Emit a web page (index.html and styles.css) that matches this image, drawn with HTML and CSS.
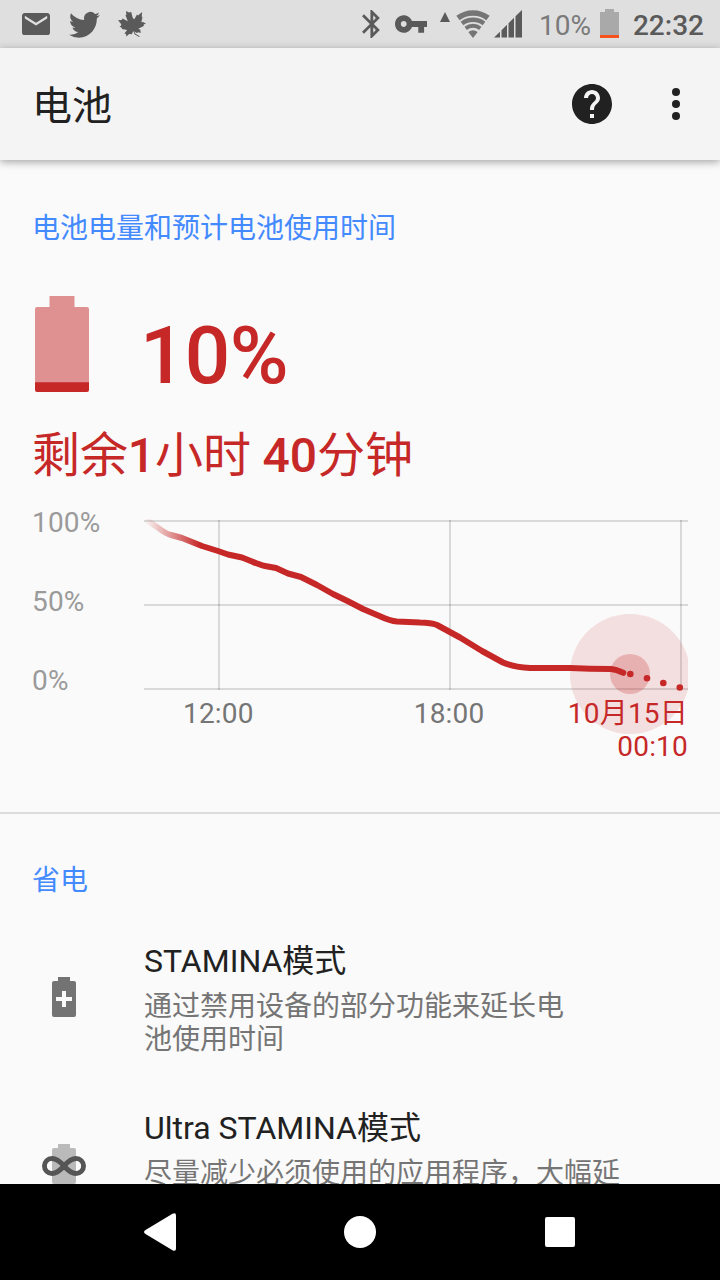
FILE: index.html
```html
<!DOCTYPE html>
<html lang="zh-CN">
<head>
<meta charset="utf-8">
<title>电池</title>
<link rel="stylesheet" href="styles.css">
</head>
<body>
<div class="screen">
  <div class="status-bar">
    <div class="notifications">
      <svg class="mail" width="28" height="22.4" viewBox="2 4 20 16"><path d="M20 4H4c-1.1 0-1.99.9-1.99 2L2 18c0 1.1.9 2 2 2h16c1.1 0 2-.9 2-2V6c0-1.1-.9-2-2-2zm0 4l-8 5-8-5V6l8 5 8-5v2z"/></svg>
      <svg width="31" height="27" viewBox="0 1.5 24 20.5" preserveAspectRatio="none"><path d="M23.95 4.57a10 10 0 0 1-2.82.77 4.96 4.96 0 0 0 2.16-2.72c-.95.55-2 .95-3.13 1.18a4.92 4.92 0 0 0-8.38 4.48C7.69 8.1 4.07 6.13 1.64 3.16a4.92 4.92 0 0 0 1.52 6.57 4.9 4.9 0 0 1-2.23-.61v.06c0 2.39 1.7 4.38 3.95 4.83a5 5 0 0 1-2.21.08 4.94 4.94 0 0 0 4.6 3.42A9.87 9.87 0 0 1 0 19.54a13.99 13.99 0 0 0 7.55 2.21c9.05 0 13.99-7.5 13.99-13.98 0-.21 0-.42-.02-.63a9.94 9.94 0 0 0 2.46-2.55z"/></svg>
      <svg width="28" height="26" viewBox="0 0 28 26"><path d="M8 0l3 1.4L13.2 1l1.6 6 1.5 1.3L19 3.600l1 .8L24.200 1l-.5 4.400 .8.8-1.200 5 1.600-.3 3.100 1.600-2.300 1 .1 1.500-5.500 2.700 2 1 .4 3.200-2.300-.6-1.500.8-2.600-1.600 1.200 2.300 4.200 2.400-.6.8-4.600-2.700-1.100-3.400-1.700 3.400-2.500-.2-2.900 2.400-.3-2.500-1.600-.6 2.700-3.400-5.100-.9-.3-1.400-2.200-1.100 1.700-1.200-.1-1.500L0 9.200l3.800-.3.700-1.400 5.300 2.700-2.300-6 .9-.7z"/></svg>
    </div>
    <div class="system">
      <svg class="bluetooth" width="18" height="28" viewBox="5 2 12.800 20"><path d="M17.710 7.710L12 2h-1v7.590L6.410 5 5 6.410 10.590 12 5 17.590 6.410 19 11 14.410V22h1l5.710-5.710-4.300-4.290 4.300-4.290zM13 5.830l1.880 1.880L13 9.590V5.830zm1.880 10.460L13 18.170v-3.760l1.880 1.880z"/></svg>
      <svg class="key" width="32" height="18" viewBox="1 6 22 12"><path d="M12.650 10C11.830 7.670 9.610 6 7 6c-3.310 0-6 2.690-6 6s2.690 6 6 6c2.610 0 4.830-1.670 5.650-4H17v4h4v-4h2v-4H12.650zM7 14c-1.100 0-2-.9-2-2s.9-2 2-2 2 .9 2 2-.9 2-2 2z"/></svg>
      <svg class="uplink" width="10" height="10" viewBox="0 0 10 10"><path d="M5 0l5 10H0z"/></svg>
      <svg class="wifi" width="34" height="28" viewBox="0 0 34 28">
        <g class="wifi-arcs"><path stroke-width="5.600" d="M2 8A25 25 0 0 1 32 8"/><path stroke-width="4.500" d="M6 13.500A18.200 18.200 0 0 1 28 13.500"/><path stroke-width="4" d="M9.700 18.300A12.200 12.200 0 0 1 24.300 18.300"/></g>
        <path d="M12.300 22A7.700 7.700 0 0 1 21.700 22L17 28z"/>
      </svg>
      <svg class="signal" width="28" height="28" viewBox="0 0 28 28"><path d="M0 27.500L6 21.700v5.800zM7.500 20.200L13 14.700v12.800H7.500zM14.500 13.200l5.500-5.500v19.800h-5.500zM21.500 6.200L28 0v27.500h-6.500z"/></svg>
      <span class="battery-percent">10%</span>
      <svg class="battery-mini" width="19" height="29" viewBox="0 0 19 29"><path fill="#a9a9a9" d="M5 0h9v3h5v23H0V3h5z"/><path fill="#f4511e" d="M0 26h19v3H0z"/></svg>
      <span class="clock">22:32</span>
    </div>
  </div>

  <header class="toolbar">
    <h1>电池</h1>
    <svg class="help" width="40" height="40" viewBox="2 2 20 20"><path d="M12 2C6.480 2 2 6.480 2 12s4.480 10 10 10 10-4.480 10-10S17.520 2 12 2zm1 17h-2v-2h2v2zm2.070-7.750l-.9.920C13.450 12.900 13 13.500 13 15h-2v-.5c0-1.100.45-2.100 1.170-2.830l1.240-1.260c.37-.36.590-.86.590-1.410 0-1.100-.9-2-2-2s-2 .9-2 2H8c0-2.210 1.790-4 4-4s4 1.790 4 4c0 .88-.36 1.680-.93 2.250z"/></svg>
    <svg width="8" height="32" viewBox="0 0 8 32"><circle cx="4" cy="4" r="4"/><circle cx="4" cy="16" r="4"/><circle cx="4" cy="28" r="4"/></svg>
  </header>

  <main>
    <section class="summary">
      <h2>电池电量和预计电池使用时间</h2>
      <div class="level">
        <svg width="54" height="96" viewBox="0 0 54 96"><path fill="#df9191" d="M14.500 0h25v11H52q2 0 2 2v74H0V13q0-2 2-2h12.500z"/><path fill="#c62828" d="M0 86.300h54V94q0 2-2 2H2q-2 0-2-2z"/></svg>
        <span class="percent">10%</span>
      </div>
      <p class="remaining">剩余<b>1</b>小时 <b>40</b>分钟</p>
      <div class="chart">
        <div class="y-axis"><span>100%</span><span>50%</span><span>0%</span></div>
        <div class="plot">
          <svg class="graph" width="544" height="216" viewBox="144 519 544 216">
            <defs><linearGradient id="fade" gradientUnits="userSpaceOnUse" x1="144" y1="0" x2="200" y2="0"><stop offset="0" stop-color="#c62828" stop-opacity="0"/><stop offset="1" stop-color="#c62828"/></linearGradient></defs>
            <path class="grid" d="M144 521H688M144 605H688M144 689H688"/>
            <path class="grid" d="M219 520V690M450 520V690M681 520V690"/>
            <circle cx="630" cy="674" r="60" fill="#c62828" fill-opacity=".125"/>
            <circle cx="630" cy="674" r="20" fill="#c62828" fill-opacity=".25"/>
            <path class="history" stroke="url(#fade)" d="M146 520L157 527Q166 534 171 535L182 538L202 546L218 551L228 554.500L242 557.500L252 561.500Q260 565 265 566L276 568L288 573.500L301 577L317 585L333 594L348 601.300L363 609L380 616.300Q390 621 397 621.500L420 622.500Q431 622.700 437 625L460 637.500L482 651L503 662.500Q513 667 530 668H570L590 668.700L611 669Q616 669.500 623.300 672.800"/>
            <g fill="#c62828"><circle cx="630.300" cy="674" r="3.300"/><circle cx="647" cy="678.300" r="3.300"/><circle cx="663.300" cy="683" r="3.300"/><circle cx="679.800" cy="687.500" r="3.300"/></g>
          </svg>
          <div class="x-axis"><span>12:00</span><span class="mid">18:00</span><span class="end">10月15日<br>00:10</span></div>
        </div>
      </div>
    </section>

    <section class="saver">
      <h2>省电</h2>
      <div class="row">
        <svg width="48" height="48" viewBox="0 0 48 48"><path fill="#737373" d="M18 4h12v4h4q2 0 2 2v32q0 2-2 2H14q-2 0-2-2V10q0-2 2-2h4z"/><path fill="#fafafa" d="M22 18h4v6h6v4h-6v6h-4v-6h-6v-4h6z"/></svg>
        <div class="row-text">
          <h3>STAMINA模式</h3>
          <p>通过禁用设备的部分功能来延长电<br>池使用时间</p>
        </div>
      </div>
      <div class="row">
        <svg width="48" height="48" viewBox="0 0 48 48"><path fill="#bababa" d="M18 4h12v4h4q2 0 2 2v32q0 2-2 2H14q-2 0-2-2V10q0-2 2-2h4z"/><path class="infinity" d="M24 26C20.500 22 16.500 18.500 12 18.500a7.500 7.500 0 0 0 0 15C16.500 33.500 20.500 30 24 26S31.500 18.500 36 18.500a7.500 7.500 0 0 1 0 15C31.500 33.500 27.500 30 24 26z"/><path fill="#fafafa" d="M12 21a5 5 0 0 0 0 10z"/><path fill="#fafafa" d="M36 21a5 5 0 0 1 0 10z"/></svg>
        <div class="row-text">
          <h3>Ultra STAMINA模式</h3>
          <p>尽量减少必须使用的应用程序，大幅延</p>
        </div>
      </div>
    </section>
  </main>

  <nav class="nav-bar">
    <svg width="32" height="38" viewBox="0 0 32 38"><path d="M1.500 17L28.500 .7Q32-1 32 2.500v33q0 3.500-3.500 1.800L1.500 21q-3-2 0-4z"/></svg>
    <svg width="32" height="32" viewBox="0 0 32 32"><circle cx="16" cy="16" r="16"/></svg>
    <svg class="recents" width="30" height="30" viewBox="0 0 30 30"><rect width="30" height="30" rx="2"/></svg>
  </nav>
</div>
</body>
</html>
```
FILE: styles.css
```css
* { box-sizing: border-box; }
body, h1, h2, h3, p { margin: 0; font-weight: 400; }
body { font-family: Roboto, "Noto Sans CJK SC", sans-serif; }
svg { display: block; flex: none; }

.screen {
  width: 720px;
  height: 1280px;
  display: flex;
  flex-direction: column;
  overflow: hidden;
  background: #fafafa;
  color: #212121;
}

.status-bar {
  flex: none;
  height: 48px;
  padding: 0 16px 0 22px;
  display: flex;
  justify-content: space-between;
  background: #dfdfdf;
  color: #5a5a5a;
  fill: #5a5a5a;
  font-size: 28px;
  line-height: 44px;
}
.notifications { display: flex; align-items: center; gap: 18px; }
.notifications .mail { margin-right: 1px; }
.system { display: flex; align-items: center; }
.key { margin-left: 15px; }
.uplink { margin: 0 6px 14px 13px; }
.wifi { fill: #757575; }
.wifi-arcs { fill: none; stroke: #757575; }
.signal { margin-left: 4px; }
.battery-percent { margin-left: 17px; padding-top: 4px; color: #7a7a7a; }
.battery-mini { margin: 0 14px 1px 9px; }
.clock { padding-top: 4px; font-weight: 500; }

.toolbar {
  flex: none;
  position: relative;
  height: 112px;
  padding: 0 40px 0 32px;
  display: flex;
  align-items: center;
  background: #f4f4f4;
  fill: #212121;
  box-shadow: 0 2px 8px rgba(0, 0, 0, .35);
}
.toolbar h1 { flex: 1; padding-top: 5px; font-size: 40px; line-height: 60px; }
.help { margin-right: 60px; }

main { flex: 1; min-height: 0; overflow: hidden; }
h2 { font-size: 28px; line-height: 40px; color: #448aff; }

.summary {
  height: 654px;
  padding: 49px 32px 0;
  border-bottom: 2px solid #dcdcdc;
  color: #c62828;
}
.level { display: flex; margin: 47px 0 0 3px; height: 96px; }
.percent {
  margin-left: 51px;
  font-size: 80px;
  font-weight: 500;
  line-height: 120px;
  letter-spacing: -.6px;
}
.remaining { margin-top: 29px; font-size: 48px; line-height: 70px; letter-spacing: -.1px; }
.remaining b { font-weight: 500; }
.chart { display: flex; margin-top: 28px; font-size: 28px; line-height: 33px; letter-spacing: .2px; }
.y-axis {
  width: 112px;
  height: 191px;
  margin-top: -13px;
  display: flex;
  flex-direction: column;
  justify-content: space-between;
  color: #9a9a9a;
}
.plot { width: 544px; }
.graph { margin-bottom: -38px; }
.grid { stroke: #000; stroke-opacity: .13; stroke-width: 2; }
.history { fill: none; stroke-width: 6; stroke-linecap: round; stroke-linejoin: round; }
.x-axis { position: relative; display: flex; padding-left: 39px; color: #757575; }
.x-axis .mid { margin-left: 160px; }
.x-axis .end { margin-left: auto; text-align: right; color: #c62828; }

.saver { padding-left: 32px; }
.saver h2 { padding-top: 47px; }
.row { display: flex; height: 167px; padding-left: 8px; }
.row > svg { margin: 72px 56px 0 0; }
.row h3 { margin-top: 41px; font-size: 32px; line-height: 38px; }
.row p { margin-top: 10px; font-size: 28px; line-height: 33px; color: #757575; white-space: nowrap; }
.infinity { fill: none; stroke: #555; stroke-width: 5; }

.nav-bar {
  flex: none;
  height: 96px;
  padding: 0 145px 0 144px;
  display: flex;
  align-items: center;
  justify-content: space-between;
  background: #000;
  fill: #fff;
}
.recents { margin-left: 1px; }
```
